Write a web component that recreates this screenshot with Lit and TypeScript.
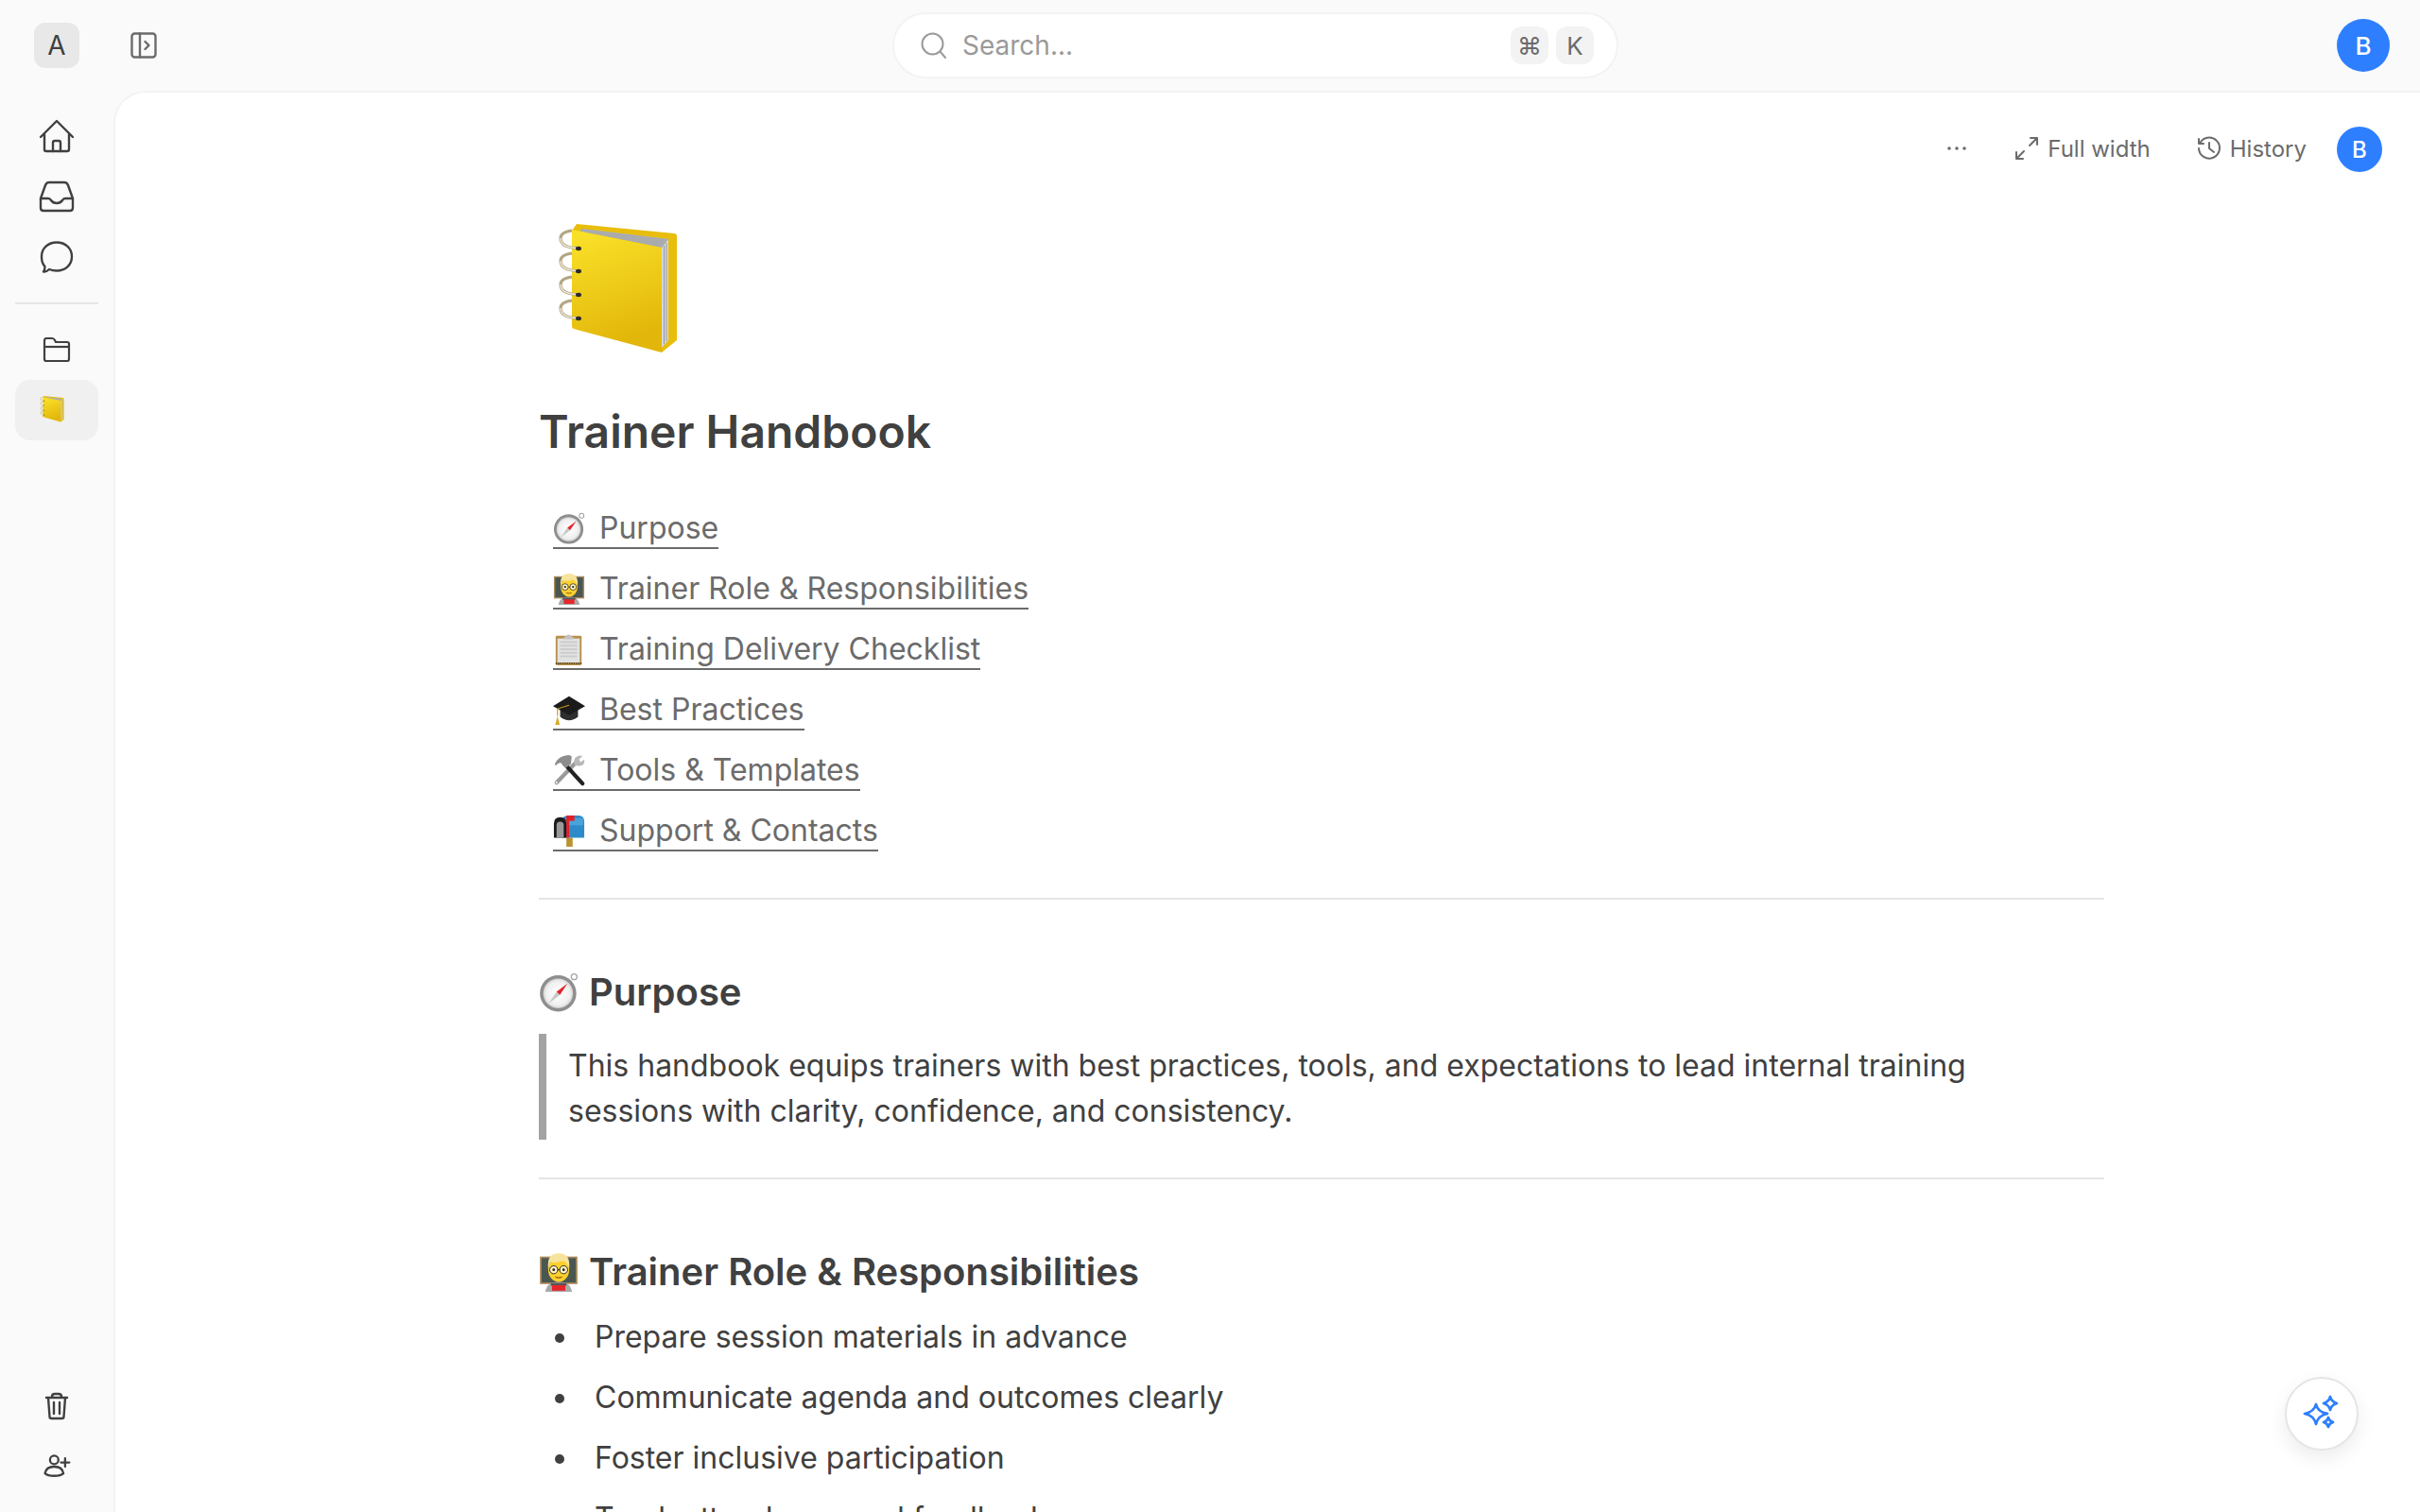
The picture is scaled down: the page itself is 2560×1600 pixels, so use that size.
import { LitElement, html, css, svg } from "lit";
import { customElement } from "lit/decorators.js";

// emoji are drawn by hand, there is no colour emoji font in the sandbox
const notebook = svg`<svg viewBox="0 0 144 144" class="emoji-svg">
  <defs>
    <linearGradient id="nb" x1="0" y1="0" x2="0.25" y2="1"><stop offset="0" stop-color="#fbe32a"/><stop offset="1" stop-color="#e2b60a"/></linearGradient>
  </defs>
  <path d="M21 12 L26 5 L129 15 Q132 15 132 18 L132 128 L116 141 Z" fill="#e8bd0c"/>
  <path d="M31 10 L123 21 L123 125 L116 130 L116 30 Z" fill="#c4c6c8"/>
  <path d="M116 30 L123 21 L123 128 L116 136 Z" fill="#d5d6d8"/>
  <path d="M118.500 28V132M121 25V129" stroke="#97999c" stroke-width="1"/>
  <path d="M31 10 L123 21 L116 30 L30 13 Z" fill="#a9abad"/>
  <path d="M21 11 L116 30 V141 L23 116 Q21 115.500 21 113 Z" fill="url(#nb)"/>
  ${[31, 55, 80, 105].map(
    (y) => svg`<path d="M29 ${y} C17 ${y - 1} 9 ${y - 3} 9 ${y - 11} C9 ${y - 15} 14 ${y - 18} 21 ${y - 19}" fill="none" stroke="#b3a684" stroke-width="3.200"/>
    <path d="M29 ${y} C17 ${y - 1} 9 ${y - 3} 9 ${y - 11}" fill="none" stroke="#f1ecdc" stroke-width="1.300"/>
    <ellipse cx="28" cy="${y}" rx="3" ry="2.200" fill="#2a2a2a"/>`
  )}
</svg>`;

const compass = svg`<svg viewBox="0 0 36 36" class="emoji-svg">
  <defs><radialGradient id="cp"><stop offset="0" stop-color="#fff"/><stop offset="0.8" stop-color="#f0f0f0"/><stop offset="1" stop-color="#d2d2d2"/></radialGradient></defs>
  <circle cx="32" cy="4" r="2.600" fill="none" stroke="#a5a5a5" stroke-width="1.100"/>
  <circle cx="17.500" cy="19" r="16.500" fill="#8e8e8e"/>
  <circle cx="17.500" cy="19" r="13.500" fill="url(#cp)"/>
  <path d="M26 10 L16 17.500 L19 20.500 Z" fill="#e6242b"/>
  <path d="M9 28 L16 17.500 L19 20.500 Z" fill="#c7c7c7"/>
</svg>`;

const teacher = svg`<svg viewBox="0 0 36 36" class="emoji-svg">
  <rect x="1" y="4" width="34" height="25" fill="#a8895a"/>
  <rect x="2.500" y="5.500" width="31" height="22" fill="#4a5650"/>
  <path d="M6 36 Q7 27 18 27 Q29 27 30 36 Z" fill="#a9a9a9"/>
  <rect x="11" y="28" width="14" height="2.500" fill="#555"/>
  <rect x="12" y="30" width="12" height="5" fill="#e5272c"/>
  <ellipse cx="18" cy="16" rx="9.500" ry="11" fill="#fdd02f"/>
  <path d="M8.500 15 Q7 1 18 1 Q29 1 27.500 15 Q26 9 22 8 Q15 10 10.500 9 Q9.500 11 8.500 15 Z" fill="#f6e49a"/>
  <circle cx="13.500" cy="16" r="3.600" fill="#fff3c0" stroke="#222" stroke-width="0.800"/>
  <circle cx="22.500" cy="16" r="3.600" fill="#fff3c0" stroke="#222" stroke-width="0.800"/>
  <path d="M17 16H19" stroke="#222" stroke-width="0.800"/>
  <circle cx="13.500" cy="16" r="1.200" fill="#222"/><circle cx="22.500" cy="16" r="1.200" fill="#222"/>
  <path d="M15 22.500 Q18 24 21 22.500" stroke="#8c5a12" stroke-width="1" fill="none"/>
</svg>`;

const clipboard = svg`<svg viewBox="0 0 36 36" class="emoji-svg">
  <rect x="3" y="3" width="29" height="33" rx="1.500" fill="#b7904a"/>
  <rect x="5" y="6" width="25" height="27" fill="#e2e2e2"/>
  <path d="M8 10H27M8 14H27M8 18H27M8 22H27M8 26H27" stroke="#cdcdcd" stroke-width="2"/>
  <path d="M12 5 L15 3 Q17.500 0 20 3 L23 5 V7 H12 Z" fill="#c2c2c2"/>
  <path d="M3 34H32" stroke="#4a3a1c" stroke-width="1.600" stroke-dasharray="1.500 1"/>
</svg>`;

const gradCap = svg`<svg viewBox="0 0 36 36" class="emoji-svg">
  <path d="M8 17 V26 Q18 34 28 26 V17 L18 22 Z" fill="#2e2e2e"/>
  <path d="M0 14 L18 3 L36 14 L18 24 Z" fill="#1b1b1b"/>
  <path d="M18 13 L5 17 V25" fill="none" stroke="#c79a1d" stroke-width="1.200"/>
  <path d="M5 25 L7.500 35 L2.500 35 Z" fill="#d6a91f"/>
</svg>`;

const tools = svg`<svg viewBox="0 0 36 36" class="emoji-svg">
  <path d="M4 32 L25 10" stroke="#9a9a9a" stroke-width="4.500" stroke-linecap="round"/>
  <circle cx="4" cy="32" r="1.200" fill="#eee"/>
  <path d="M24 12 Q22 4 28 2 Q31 1 33 2 L29 6 L31 9 L35 6 Q36 12 31 13 Q27 14 24 12 Z" fill="#b8b8b8"/>
  <path d="M33 33 L13 11" stroke="#222" stroke-width="4.500" stroke-linecap="round"/>
  <path d="M2 11 Q6 2 17 1 Q20 1 21 3 L20 11 L14 16 L9 10 Q6 9 3 13 Z" fill="#8d8d8d"/>
</svg>`;

const mailbox = svg`<svg viewBox="0 0 36 36" class="emoji-svg">
  <rect x="15" y="26" width="7" height="10" fill="#b9932f"/>
  <path d="M10 5 Q12 1 18 1 H29 Q35 1 35 8 V26 H10 Z" fill="#2e8bc9"/>
  <path d="M14 4 H34 V12 H14 Z" fill="#5fb3e3" opacity="0.600"/>
  <path d="M1 26 V10 Q1 3 8 3 Q15 3 15 10 V26 Z" fill="#1c1c1c"/>
  <path d="M4 26 V12 Q4 8 8 8 Q12 8 12 12 V26 Z" fill="#9a9a9a"/>
  <rect x="15" y="4" width="3" height="22" fill="#e21f26"/>
  <rect x="15" y="1" width="9" height="6" fill="#e21f26"/>
</svg>`;

const sections = [
  [compass, "Purpose"],
  [teacher, "Trainer Role & Responsibilities"],
  [clipboard, "Training Delivery Checklist"],
  [gradCap, "Best Practices"],
  [tools, "Tools & Templates"],
  [mailbox, "Support & Contacts"],
] as const;

const duties = [
  "Prepare session materials in advance",
  "Communicate agenda and outcomes clearly",
  "Foster inclusive participation",
  "Track attendance and feedback",
];

@customElement("app-root")
export class AppRoot extends LitElement {
  static styles = css`
    :host {
      display: block;
      height: 100vh;
      overflow: hidden;
      background: #fafafa;
      font-family: Inter, "Liberation Sans", sans-serif;
      color: #404040;
    }
    .emoji-svg {
      display: block;
      width: 100%;
      height: 100%;
    }
    .topbar {
      height: 98px;
      box-sizing: border-box;
      display: flex;
      align-items: center;
      padding: 0 32px 2px 36px;
    }
    .logo {
      width: 48px;
      height: 48px;
      border-radius: 12px;
      background: #e8e8e8;
      display: flex;
      align-items: center;
      justify-content: center;
      font-size: 28px;
    }
    .panel-toggle {
      width: 32px;
      height: 32px;
      margin-left: 52px;
      color: #6b6b6b;
    }
    .search {
      width: 768px;
      height: 70px;
      box-sizing: border-box;
      margin-left: 776px;
      background: #fff;
      border: 2px solid #f3f3f3;
      border-radius: 35px;
      display: flex;
      align-items: center;
      padding: 0 24px 0 26px;
      font-size: 28px;
      color: #9a9a9a;
    }
    .search svg {
      width: 32px;
      height: 32px;
      margin-right: 14px;
    }
    .keys {
      margin-left: auto;
      display: flex;
      gap: 8px;
    }
    .key {
      width: 40px;
      height: 40px;
      border-radius: 12px;
      background: #f3f3f3;
      color: #6b6b6b;
      display: flex;
      align-items: center;
      justify-content: center;
      font-size: 26px;
    }
    .avatar {
      border-radius: 50%;
      background: #2e7fff;
      color: #fff;
      display: flex;
      align-items: center;
      justify-content: center;
      font-weight: 500;
      flex: none;
    }
    .topbar .avatar {
      width: 56px;
      height: 56px;
      font-size: 26px;
      margin-left: auto;
    }
    .body {
      display: flex;
      height: calc(100vh - 98px);
    }
    .rail {
      width: 122px;
      flex: none;
      box-sizing: border-box;
      display: flex;
      flex-direction: column;
      align-items: center;
      padding: 14px 2px 16px 0;
    }
    .rail-btn {
      width: 88px;
      height: 64px;
      flex: none;
      display: flex;
      align-items: center;
      justify-content: center;
      color: #404040;
      border-radius: 16px;
    }
    .rail-btn svg {
      width: 40px;
      height: 40px;
    }
    .rail-btn.small svg {
      width: 32px;
      height: 32px;
    }
    .rail-btn.active {
      background: #f0f0f0;
    }
    .rail-btn .rail-emoji {
      width: 29px;
      height: 29px;
      margin: -3px 0 0 -9px;
    }
    .rail-emoji svg {
      width: 100%;
      height: 100%;
    }
    .rail hr {
      width: 88px;
      height: 2px;
      flex: none;
      border: 0;
      background: #e5e5e5;
      margin: 16px 0;
    }
    .rail-spacer {
      flex: 1;
    }
    .main {
      flex: 1;
      min-width: 0;
      background: #fff;
      border-top-left-radius: 32px;
      box-shadow: 0 0 0 2px #f3f3f3;
      position: relative;
      overflow: hidden;
    }
    .toolbar {
      display: flex;
      align-items: center;
      justify-content: flex-end;
      height: 48px;
      padding: 35px 40px 0 0;
      font-size: 24px;
      color: #6b6b6b;
    }
    .toolbar svg {
      width: 28px;
      height: 28px;
      flex: none;
    }
    .tool {
      display: flex;
      align-items: center;
      gap: 8px;
    }
    .dots {
      margin-right: 46px;
    }
    .tool.full {
      margin-right: 48px;
    }
    .toolbar .avatar {
      width: 48px;
      height: 48px;
      font-size: 24px;
      margin: 2px 0 0 32px;
    }
    .doc {
      width: 1656px;
      margin-left: 448px;
    }
    .cover {
      width: 144px;
      height: 144px;
      margin: 51px 0 0 14px;
    }
    h1 {
      margin: 49px 0 0;
      font-size: 48px;
      line-height: 64px;
      font-weight: 600;
    }
    .toc {
      list-style: none;
      margin: 39px 0 0;
      padding: 0 0 0 15px;
    }
    .toc li {
      height: 64px;
      display: flex;
      align-items: center;
    }
    .toc a {
      display: flex;
      align-items: center;
      font-size: 32px;
      line-height: 40px;
      color: #6b6b6b;
      border-bottom: 2px solid #6b6b6b;
    }
    .toc .ic {
      width: 34px;
      height: 34px;
      margin-right: 15px;
      flex: none;
    }
    .doc hr {
      border: 0;
      height: 2px;
      background: #e5e5e5;
      margin: 0;
    }
    .doc .toc + hr {
      margin-top: 38px;
    }
    h2 {
      display: flex;
      align-items: center;
      margin: 0;
      font-size: 40px;
      line-height: 56px;
      font-weight: 600;
    }
    h2 .ic {
      width: 42px;
      height: 42px;
      margin-right: 11px;
      flex: none;
    }
    h2.first {
      margin-top: 70px;
    }
    blockquote {
      margin: 16px 0 0;
      padding: 10px 100px 6px 23px;
      border-left: 8px solid #a3a3a3;
      font-size: 32px;
      line-height: 48px;
    }
    .doc blockquote + hr {
      margin-top: 40px;
    }
    h2.second {
      margin-top: 70px;
    }
    .duties {
      list-style: none;
      margin: 9px 0 0;
      padding: 0 0 0 59px;
      font-size: 32px;
      line-height: 64px;
    }
    .duties li {
      position: relative;
    }
    .duties li::before {
      content: "";
      position: absolute;
      left: -42px;
      top: 28px;
      width: 10px;
      height: 10px;
      border-radius: 50%;
      background: #404040;
    }
    .fab {
      position: absolute;
      right: 65px;
      bottom: 65px;
      width: 78px;
      height: 78px;
      box-sizing: border-box;
      background: #fff;
      border: 2px solid #e5e5e5;
      border-radius: 50%;
      box-shadow: 0 8px 20px rgba(0, 0, 0, 0.08);
      display: flex;
      align-items: center;
      justify-content: center;
      color: #2e7fff;
    }
    .fab svg {
      width: 40px;
      height: 40px;
    }
  `;

  render() {
    return html`
      <div class="topbar">
        <div class="logo">A</div>
        <svg class="panel-toggle" viewBox="0 0 32 32" fill="none" stroke="currentColor" stroke-width="2.400" stroke-linejoin="round" stroke-linecap="round">
          <rect x="3.500" y="3.500" width="25" height="25" rx="3"/>
          <path d="M12 3.500V28.500M17.500 12 L21.500 16 L17.500 20"/>
        </svg>
        <div class="search">
          <svg viewBox="0 0 32 32" fill="none" stroke="#9a9a9a" stroke-width="2" stroke-linecap="round">
            <circle cx="14.500" cy="14.500" r="11"/><path d="M22.500 22.500 L28 29"/>
          </svg>
          Search...
          <div class="keys"><span class="key">⌘</span><span class="key">K</span></div>
        </div>
        <div class="avatar">B</div>
      </div>
      <div class="body">
        <nav class="rail">
          <div class="rail-btn">
            <svg viewBox="0 0 40 40" fill="none" stroke="currentColor" stroke-width="2.400" stroke-linejoin="round" stroke-linecap="round">
              <path d="M3 21 L20 4 L37 21M7 18V34Q7 36 9 36H31Q33 36 33 34V18"/>
              <path d="M16 36V27Q16 25 18 25H22Q24 25 24 27V36"/>
            </svg>
          </div>
          <div class="rail-btn">
            <svg viewBox="0 0 40 40" fill="none" stroke="currentColor" stroke-width="2.400" stroke-linejoin="round" stroke-linecap="round">
              <path d="M3 22 L8 8 Q9 5 12 5H28Q31 5 32 8 L37 22V32Q37 35 34 35H6Q3 35 3 32Z"/>
              <path d="M3 22H11Q13 22 14 24 Q16 27 20 27 Q24 27 26 24 Q27 22 29 22H37"/>
            </svg>
          </div>
          <div class="rail-btn">
            <svg viewBox="0 0 40 39" fill="none" stroke="currentColor" stroke-width="2.400" stroke-linejoin="round" stroke-linecap="round">
              <path d="M20 4C29 4 36 10 36 19C36 28 29 34 20 34C17 34 14.500 33.500 12 32.500C10.500 34 8.500 35.500 6 35C7.500 33 7.500 31 7.500 29.500C5 27 4 23 4 19C4 10 11 4 20 4Z"/>
            </svg>
          </div>
          <hr />
          <div class="rail-btn small">
            <svg viewBox="0 0 32 32" fill="none" stroke="currentColor" stroke-width="2.200" stroke-linejoin="round">
              <path d="M3 7Q3 4 5 4H11Q13 4 14 6L15 8H27Q29 8 29 10V26Q29 28 27 28H5Q3 28 3 26Z"/><path d="M3 13H29"/>
            </svg>
          </div>
          <div class="rail-btn active"><div class="rail-emoji">${notebook}</div></div>
          <div class="rail-spacer"></div>
          <div class="rail-btn small">
            <svg viewBox="0 0 32 32" fill="none" stroke="currentColor" stroke-width="2.400" stroke-linejoin="round" stroke-linecap="round">
              <path d="M5 7H27M11 7V6Q11 3 14 3H18Q21 3 21 6V7M7 7 L8.500 27Q8.500 29 10.500 29H21.500Q23.500 29 23.500 27L25 7M13 12V24M19 12V24"/>
            </svg>
          </div>
          <div class="rail-btn small">
            <svg viewBox="-2 -2 36 36" fill="none" stroke="currentColor" stroke-width="2.600" stroke-linejoin="round" stroke-linecap="round">
              <circle cx="13" cy="8" r="5"/><path d="M2 24C3 18 8 16 13 16C18 16 23 18 24 24C20 28 6 28 2 24Z"/><path d="M21 11H31M26 6V16"/>
            </svg>
          </div>
        </nav>
        <main class="main">
          <div class="toolbar">
            <svg class="dots" viewBox="0 0 28 28" fill="currentColor"><circle cx="6" cy="14" r="1.800"/><circle cx="14" cy="14" r="1.800"/><circle cx="22" cy="14" r="1.800"/></svg>
            <div class="tool full">
              <svg viewBox="0 0 28 28" fill="none" stroke="currentColor" stroke-width="2" stroke-linecap="round" stroke-linejoin="round">
                <path d="M17 11 L25 3M18 3H25V10M11 17 L3 25M3 18V25H10"/>
              </svg>
              Full width
            </div>
            <div class="tool">
              <svg viewBox="0 0 28 28" fill="none" stroke="currentColor" stroke-width="2" stroke-linecap="round" stroke-linejoin="round">
                <path d="M4 9A11 11 0 1 1 3 14M3 4V9H8M14 8V14L19 18"/>
              </svg>
              History
            </div>
            <div class="avatar">B</div>
          </div>
          <article class="doc">
            <div class="cover">${notebook}</div>
            <h1>Trainer Handbook</h1>
            <ul class="toc">
              ${sections.map(
                ([icon, label]) => html`<li><a><span class="ic">${icon}</span>${label}</a></li>`
              )}
            </ul>
            <hr />
            <h2 class="first"><span class="ic">${compass}</span>Purpose</h2>
            <blockquote>
              This handbook equips trainers with best practices, tools, and expectations to lead internal training
              sessions with clarity, confidence, and consistency.
            </blockquote>
            <hr />
            <h2 class="second"><span class="ic">${teacher}</span>Trainer Role &amp; Responsibilities</h2>
            <ul class="duties">
              ${duties.map((d) => html`<li>${d}</li>`)}
            </ul>
          </article>
          <div class="fab">
            <svg viewBox="0 0 40 40" fill="none" stroke="currentColor" stroke-width="2.800" stroke-linejoin="round">
              <path d="M14 10 Q15.500 18 26 20 Q16 22 14 31 Q12 22 2 20 Q12 18 14 10Z"/>
              <path d="M29 2 Q30 7 36 9 Q30 11 29 16 Q28 11 22 9 Q28 7 29 2Z"/>
              <path d="M27 24 Q28 28 32 29 Q28 30 27 34 Q26 30 22 29 Q26 28 27 24Z"/>
            </svg>
          </div>
        </main>
      </div>
    `;
  }
}
